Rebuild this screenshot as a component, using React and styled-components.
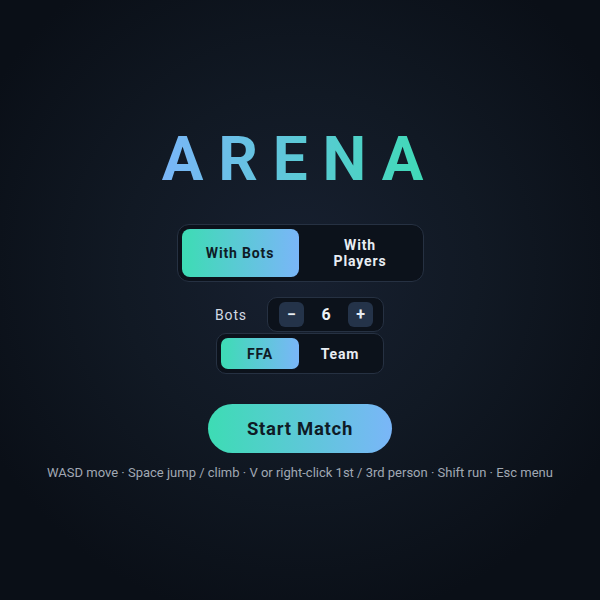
import React, { useState } from "react";
import styled, { createGlobalStyle } from "styled-components";

const Global = createGlobalStyle`
  html, body { margin: 0; padding: 0; height: 100%; }
  body { background: #0b1019; font-family: Roboto, "Liberation Sans", sans-serif; }
  #root { height: 100%; }
`;

const GREEN = "#3ddcb4";
const BLUE = "#7ab6f8";

const Screen = styled.div`
  width: 600px;
  height: 600px;
  background: radial-gradient(circle at 50% 45%, #172030 0%, #111924 40%, #0a0f17 80%);
  display: flex;
  flex-direction: column;
  align-items: center;
  padding-top: 121px;
  box-sizing: border-box;
`;

const Title = styled.h1`
  margin: 0;
  font-size: 62px;
  line-height: 76px;
  font-weight: 700;
  letter-spacing: 0.24em;
  background: linear-gradient(90deg, ${BLUE}, ${GREEN});
  -webkit-background-clip: text;
  background-clip: text;
  color: transparent;
`;

const Segmented = styled.div`
  display: grid;
  grid-template-columns: repeat(2, ${(p) => p.$w}px);
  gap: ${(p) => p.$gap}px;
  padding: 4px;
  border: 1px solid #263142;
  border-radius: ${(p) => p.$r}px;
  background: #0c121b;
  margin-top: ${(p) => p.$mt || 0}px;
`;

const SegButton = styled.button`
  border: none;
  height: ${(p) => p.$h}px;
  border-radius: ${(p) => p.$r}px;
  font-family: Roboto, "Liberation Sans", sans-serif;
  font-weight: 700;
  font-size: 14px;
  letter-spacing: 0.06em;
  line-height: 16px;
  cursor: pointer;
  padding: 0 8px;
  background: ${(p) => (p.$active ? `linear-gradient(90deg, ${GREEN}, ${BLUE})` : "transparent")};
  color: ${(p) => (p.$active ? "#0f1b26" : "#e8edf3")};
`;

const Options = styled.div`
  display: flex;
  flex-direction: column;
  align-items: stretch;
  gap: 1px;
  margin-top: 15px;
`;

const BotsRow = styled.div`
  display: flex;
  align-items: center;
  justify-content: space-between;
`;

const Label = styled.span`
  color: #d3dae3;
  font-size: 14px;
  letter-spacing: 0.06em;
  margin-left: -1px;
`;

const Stepper = styled.div`
  display: flex;
  align-items: center;
  justify-content: space-between;
  width: 117px;
  height: 35px;
  box-sizing: border-box;
  padding: 0 10px 0 11px;
  border: 1px solid #263142;
  border-radius: 10px;
  background: #0c121b;
`;

const StepButton = styled.button`
  width: 25px;
  height: 25px;
  border: none;
  border-radius: 6px;
  background: #243349;
  color: #e8edf3;
  font-family: Roboto, "Liberation Sans", sans-serif;
  font-size: 16px;
  font-weight: 700;
  display: flex;
  align-items: center;
  justify-content: center;
  padding: 0;
  cursor: pointer;
`;

const Value = styled.span`
  color: #eef2f6;
  font-size: 16px;
  font-weight: 700;
`;

const StartButton = styled.button`
  margin-top: 30px;
  width: 184px;
  height: 49px;
  border: none;
  border-radius: 25px;
  background: linear-gradient(90deg, ${GREEN}, ${BLUE});
  color: #0f1b26;
  font-family: Roboto, "Liberation Sans", sans-serif;
  font-size: 18.5px;
  font-weight: 700;
  letter-spacing: 0.04em;
  cursor: pointer;
`;

const Help = styled.p`
  margin: 11px 0 0;
  color: #a0a8b3;
  font-size: 13px;
  line-height: 18px;
`;

export default function App() {
  const [mode, setMode] = useState("bots");
  const [teams, setTeams] = useState("ffa");
  const [bots, setBots] = useState(6);
  return (
    <>
      <Global />
      <Screen>
        <Title>ARENA</Title>
        <Segmented $w={117} $gap={3} $r={12} $mt={27}>
          <SegButton $h={48} $r={8} $active={mode === "bots"} onClick={() => setMode("bots")}>
            With Bots
          </SegButton>
          <SegButton $h={48} $r={8} $active={mode === "players"} onClick={() => setMode("players")}>
            With<br />Players
          </SegButton>
        </Segmented>
        <Options>
          <BotsRow>
            <Label>Bots</Label>
            <Stepper>
              <StepButton onClick={() => setBots(Math.max(1, bots - 1))}>−</StepButton>
              <Value>{bots}</Value>
              <StepButton onClick={() => setBots(bots + 1)}>+</StepButton>
            </Stepper>
          </BotsRow>
          <Segmented $w={78} $gap={2} $r={10}>
            <SegButton $h={31} $r={7} $active={teams === "ffa"} onClick={() => setTeams("ffa")}>
              FFA
            </SegButton>
            <SegButton $h={31} $r={7} $active={teams === "team"} onClick={() => setTeams("team")}>
              Team
            </SegButton>
          </Segmented>
        </Options>
        <StartButton>Start Match</StartButton>
        <Help>WASD move · Space jump / climb · V or right-click 1st / 3rd person · Shift run · Esc menu</Help>
      </Screen>
    </>
  );
}
